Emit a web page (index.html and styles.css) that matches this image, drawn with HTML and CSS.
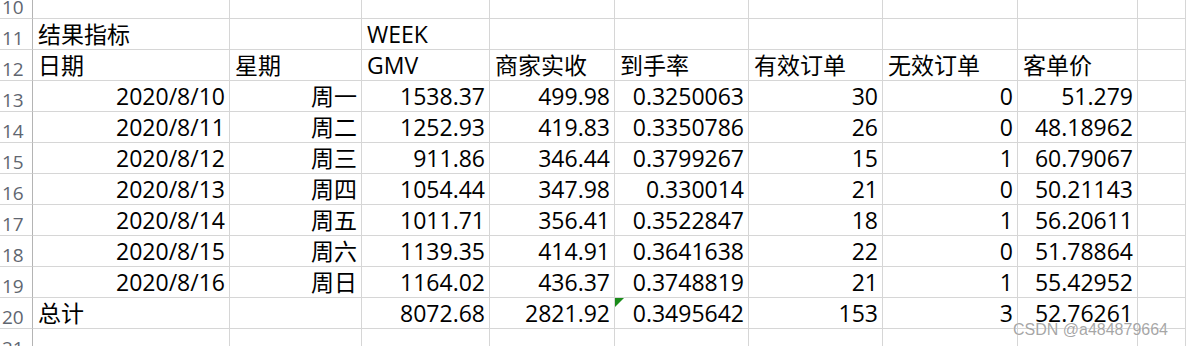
FILE: index.html
```html
<!DOCTYPE html>
<html lang="zh-CN">
<head>
<meta charset="utf-8">
<title>Sheet</title>
<link rel="stylesheet" href="styles.css">
</head>
<body>
<div class="sheet">
  <div class="c h first"><span>10</span></div><div class="c first"></div><div class="c first"></div><div class="c first"></div><div class="c first"></div><div class="c first"></div><div class="c first"></div><div class="c first"></div><div class="c first"></div><div class="c first"></div>

  <div class="c h"><span>11</span></div><div class="c t"><span>结果指标</span></div><div class="c"></div><div class="c t"><span>WEEK</span></div><div class="c"></div><div class="c"></div><div class="c"></div><div class="c"></div><div class="c"></div><div class="c"></div>

  <div class="c h"><span>12</span></div><div class="c t"><span>日期</span></div><div class="c t"><span>星期</span></div><div class="c t"><span>GMV</span></div><div class="c t"><span>商家实收</span></div><div class="c t"><span>到手率</span></div><div class="c t"><span>有效订单</span></div><div class="c t"><span>无效订单</span></div><div class="c t"><span>客单价</span></div><div class="c"></div>

  <div class="c h"><span>13</span></div><div class="c n"><span>2020/8/10</span></div><div class="c n"><span>周一</span></div><div class="c n"><span>1538.37</span></div><div class="c n"><span>499.98</span></div><div class="c n"><span>0.3250063</span></div><div class="c n"><span>30</span></div><div class="c n"><span>0</span></div><div class="c n"><span>51.279</span></div><div class="c"></div>

  <div class="c h"><span>14</span></div><div class="c n"><span>2020/8/11</span></div><div class="c n"><span>周二</span></div><div class="c n"><span>1252.93</span></div><div class="c n"><span>419.83</span></div><div class="c n"><span>0.3350786</span></div><div class="c n"><span>26</span></div><div class="c n"><span>0</span></div><div class="c n"><span>48.18962</span></div><div class="c"></div>

  <div class="c h"><span>15</span></div><div class="c n"><span>2020/8/12</span></div><div class="c n"><span>周三</span></div><div class="c n"><span>911.86</span></div><div class="c n"><span>346.44</span></div><div class="c n"><span>0.3799267</span></div><div class="c n"><span>15</span></div><div class="c n"><span>1</span></div><div class="c n"><span>60.79067</span></div><div class="c"></div>

  <div class="c h"><span>16</span></div><div class="c n"><span>2020/8/13</span></div><div class="c n"><span>周四</span></div><div class="c n"><span>1054.44</span></div><div class="c n"><span>347.98</span></div><div class="c n"><span>0.330014</span></div><div class="c n"><span>21</span></div><div class="c n"><span>0</span></div><div class="c n"><span>50.21143</span></div><div class="c"></div>

  <div class="c h"><span>17</span></div><div class="c n"><span>2020/8/14</span></div><div class="c n"><span>周五</span></div><div class="c n"><span>1011.71</span></div><div class="c n"><span>356.41</span></div><div class="c n"><span>0.3522847</span></div><div class="c n"><span>18</span></div><div class="c n"><span>1</span></div><div class="c n"><span>56.20611</span></div><div class="c"></div>

  <div class="c h"><span>18</span></div><div class="c n"><span>2020/8/15</span></div><div class="c n"><span>周六</span></div><div class="c n"><span>1139.35</span></div><div class="c n"><span>414.91</span></div><div class="c n"><span>0.3641638</span></div><div class="c n"><span>22</span></div><div class="c n"><span>0</span></div><div class="c n"><span>51.78864</span></div><div class="c"></div>

  <div class="c h"><span>19</span></div><div class="c n"><span>2020/8/16</span></div><div class="c n"><span>周日</span></div><div class="c n"><span>1164.02</span></div><div class="c n"><span>436.37</span></div><div class="c n"><span>0.3748819</span></div><div class="c n"><span>21</span></div><div class="c n"><span>1</span></div><div class="c n"><span>55.42952</span></div><div class="c"></div>

  <div class="c h"><span>20</span></div><div class="c t"><span>总计</span></div><div class="c"></div><div class="c n"><span>8072.68</span></div><div class="c n"><span>2821.92</span></div><div class="c n flag"><span>0.3495642</span></div><div class="c n"><span>153</span></div><div class="c n"><span>3</span></div><div class="c n"><span>52.76261</span></div><div class="c"></div>

  <div class="c h"><span>21</span></div><div class="c"></div><div class="c"></div><div class="c"></div><div class="c"></div><div class="c"></div><div class="c"></div><div class="c"></div><div class="c"></div><div class="c"></div>
</div>
<div class="watermark">CSDN @a484879664</div>
</body>
</html>
```

FILE: styles.css
```css
html, body {
  margin: 0;
  padding: 0;
  background: #ffffff;
  overflow: hidden;
}

body {
  width: 1186px;
  height: 346px;
  position: relative;
  font-family: "Open Sans", "Noto Sans CJK SC", sans-serif;
  color: #000000;
}

.sheet {
  display: grid;
  grid-template-columns: 33px 197px 132px 128px 125px 134px 134px 135px 120px 1fr;
  grid-template-rows: 19px;
  grid-auto-rows: 31px;
}

.c {
  box-sizing: border-box;
  border-right: 1px solid #d6d6d6;
  border-bottom: 1px solid #d6d6d6;
  display: flex;
  align-items: flex-end;
  overflow: hidden;
  white-space: nowrap;
  font-size: 23px;
  line-height: 30px;
  padding: 0 4px 0 5px;
  position: relative;
}

.c span {
  display: block;
}

.t {
  justify-content: flex-start;
}

.n {
  justify-content: flex-end;
}

.h {
  border-right-color: #b4b4b4;
  padding: 0 0 0 2px;
  font-size: 19px;
  line-height: 22px;
  color: #5f6670;
}

.flag::before {
  content: "";
  position: absolute;
  left: 0;
  top: 0;
  border-top: 9px solid #1a8c1a;
  border-right: 9px solid transparent;
}

.watermark {
  position: absolute;
  left: 1013px;
  top: 320px;
  font-family: "Liberation Sans", Arial, sans-serif;
  font-size: 16px;
  line-height: 20px;
  color: rgba(150, 150, 150, 0.85);
  text-shadow: 0 0 1px #ffffff;
  white-space: nowrap;
}
```
